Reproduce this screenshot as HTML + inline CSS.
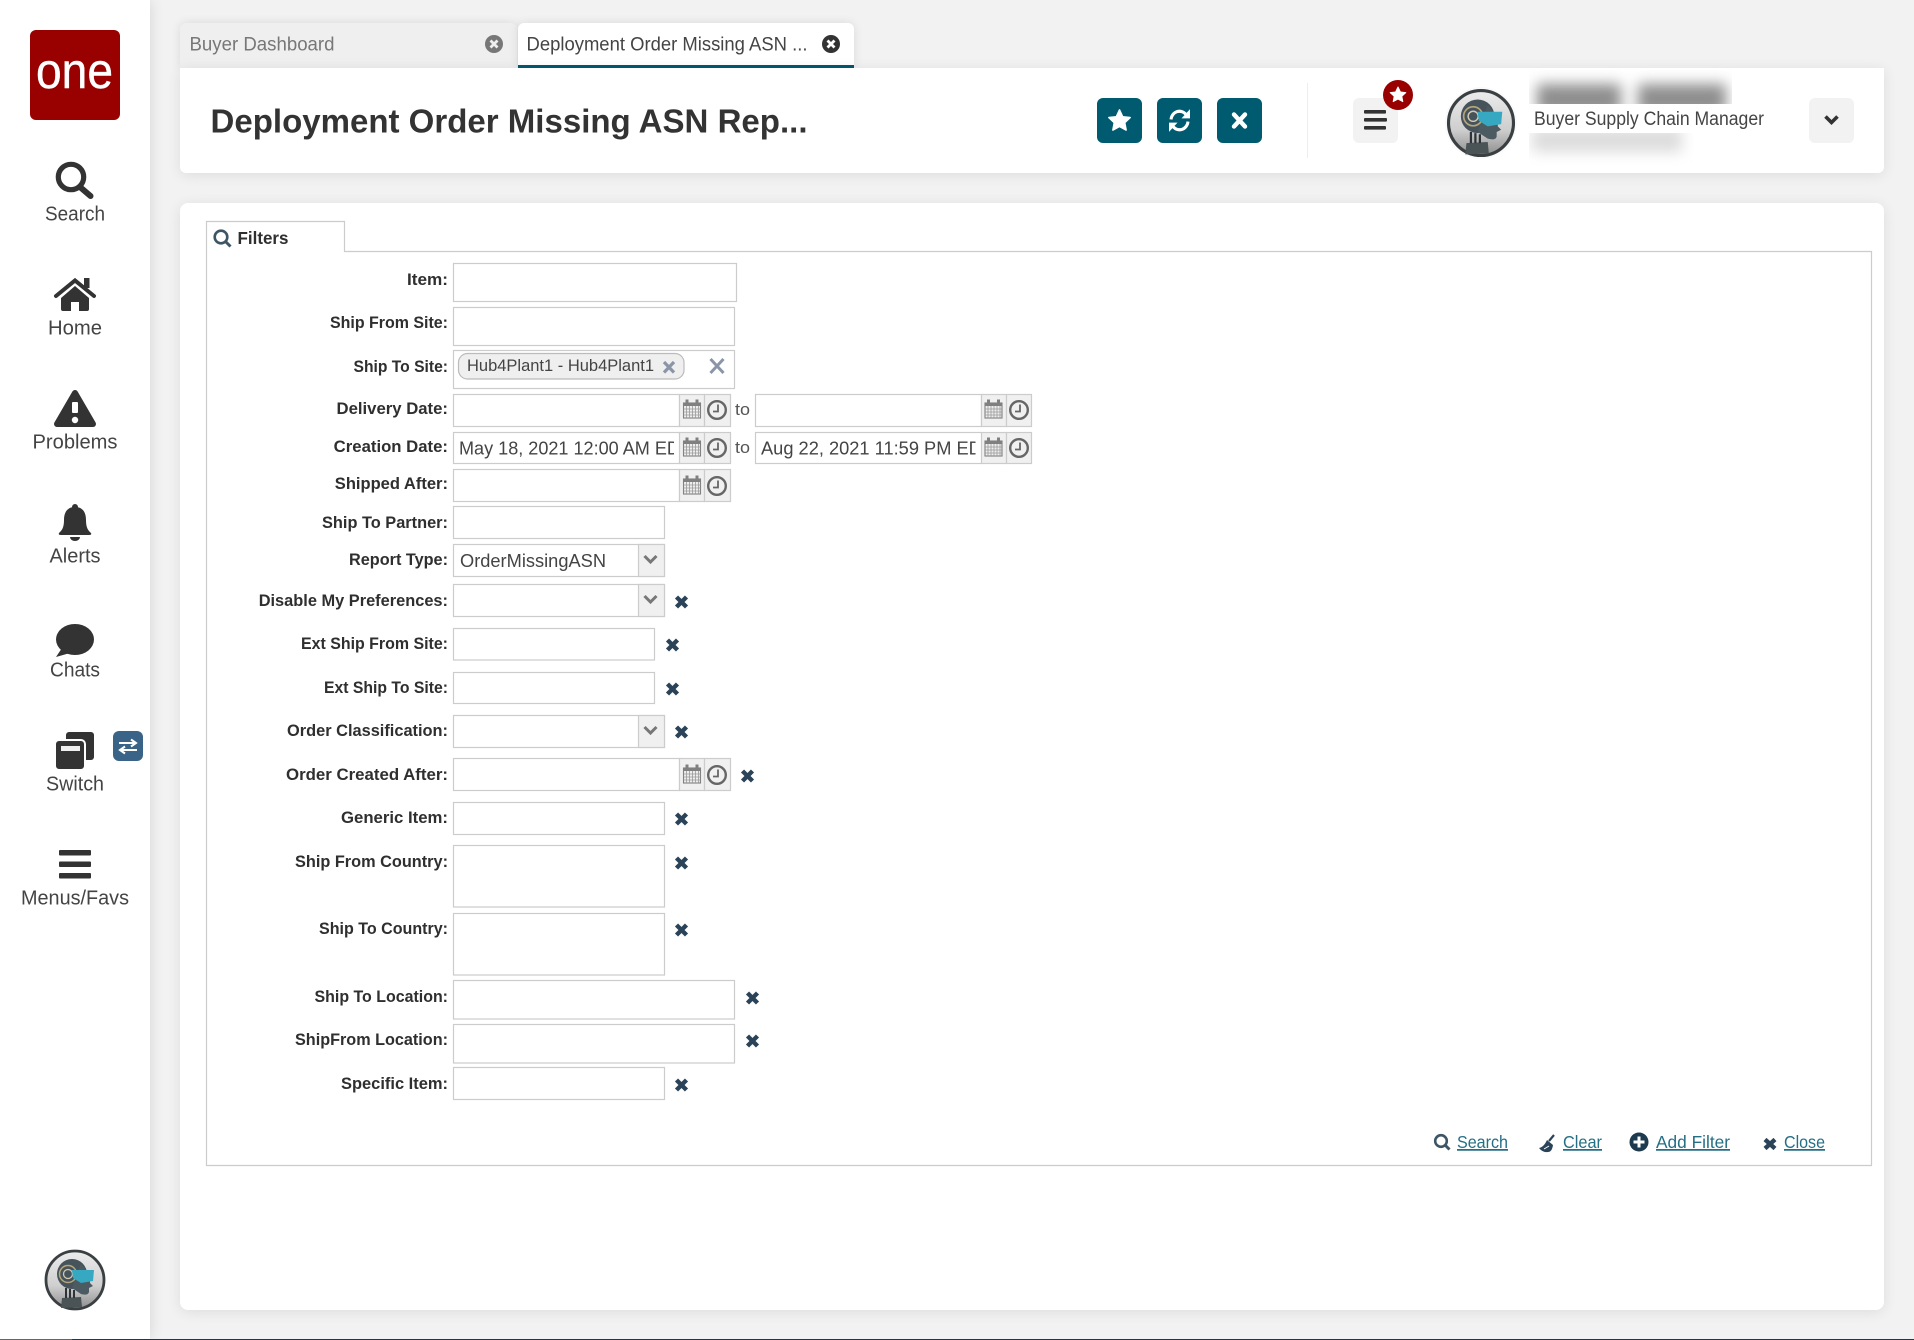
<!DOCTYPE html>
<html lang="en">
<head>
<meta charset="utf-8">
<title>Deployment Order Missing ASN Report</title>
<style>
html,body{margin:0;padding:0;width:1914px;height:1340px;overflow:hidden;background:#f2f2f2;font-family:"Liberation Sans",sans-serif}
.abs{position:absolute}
#side{left:0;top:0;width:150px;height:1340px;background:#fff;box-shadow:0 0 14px rgba(0,0,0,.12)}
#tab1{left:180px;top:23px;width:337px;height:45px;background:#efefef;border-radius:6px 6px 0 0;box-shadow:0 0 10px rgba(0,0,0,.10)}
#tab2{left:518px;top:23px;width:336px;height:45px;background:#fff;border-radius:6px 6px 0 0;box-shadow:0 0 10px rgba(0,0,0,.10);border-bottom:3px solid #005a70;box-sizing:border-box}
#head{left:180px;top:68px;width:1704px;height:105px;background:#fff;border-radius:0 0 6px 6px;box-shadow:0 2px 14px rgba(0,0,0,.09)}
#main{left:180px;top:203px;width:1704px;height:1107px;background:#fff;border-radius:8px;box-shadow:0 2px 14px rgba(0,0,0,.09)}
#bar1{left:0;top:1339px;width:72px;height:1px;background:#666}
#bar2{left:72px;top:1339px;width:1842px;height:1px;background:#1c3a4f}
svg{position:absolute;left:0;top:0}
text{font-family:"Liberation Sans",sans-serif}
.n{font-size:20px;fill:#444}
.t{font-size:19px}
.l{font-size:16.5px;font-weight:bold;fill:#2f2f2f}
.v{font-size:18.5px;fill:#444}
.a{font-size:17.5px;fill:#256f85;text-decoration:underline}
.b{fill:#fff;stroke:#ccc;stroke-width:1.2}
.c{fill:#f0f0f0;stroke:#ccc;stroke-width:1.2}
.x{stroke:#2b4358;stroke-width:4.4;fill:none}
.dd{stroke:#777;stroke-width:3;fill:none}
.k{fill:#333}
</style>
</head>
<body>
<div class="abs" id="side"></div>
<div class="abs" id="tab1"></div>
<div class="abs" id="tab2"></div>
<div class="abs" id="head"></div>
<div class="abs" id="main"></div>
<div class="abs" id="bar1"></div>
<div class="abs" id="bar2"></div>

<svg width="1914" height="1340" viewBox="0 0 1914 1340" xmlns="http://www.w3.org/2000/svg">
<defs>
<filter id="bl" x="-20%" y="-60%" width="140%" height="220%"><feGaussianBlur stdDeviation="7"/></filter>
<clipPath id="c1"><rect x="1529" y="70" width="203" height="34"/></clipPath>
<clipPath id="c2"><rect x="1529" y="133" width="165" height="34"/></clipPath>
<linearGradient id="sil" x1="0" y1="0" x2="0" y2="1"><stop offset="0" stop-color="#ececec"/><stop offset=".6" stop-color="#cfcfcf"/><stop offset="1" stop-color="#8d8d8d"/></linearGradient>
<g id="ava">
<circle r="29" fill="url(#sil)" stroke="#3a3f42" stroke-width="2.8"/>
<path d="M-14,28 L-13,18 L6,17 L7,27 Z" fill="#4a5356"/>
<path d="M-9,18 V8 M-5,18 V9 M-1,18 V10" stroke="#2d3336" stroke-width="2" fill="none"/>
<circle cx="-3" cy="-6" r="15" fill="#47535a"/>
<path d="M6,-16 L15,-5 L15,3 L18,6 L14,8 L14,12 Q13,16 6,14 L-3,8 Z" fill="#4c5a62"/>
<circle cx="-7" cy="-6" r="8.5" fill="none" stroke="#b7a57a" stroke-width="1.5"/>
<circle cx="-7" cy="-6" r="4.5" fill="none" stroke="#cfc9b4" stroke-width="1.3"/>
<path d="M-3,-10 L19,-10 L18,1 L6,3 L-2,-2 Z" fill="#37a8c2"/>
</g>
<g id="cal">
<rect x="-8.5" y="-6" width="17" height="15" fill="#eee" stroke="#808080" stroke-width="1.1"/>
<rect x="-9" y="-6.5" width="18" height="3.5" fill="#808080"/>
<rect x="-6.5" y="-9.5" width="3" height="4" fill="#808080"/><rect x="3.5" y="-9.5" width="3" height="4" fill="#808080"/>
<path d="M-5.5,-3V9M-2.5,-3V9M.5,-3V9M3.5,-3V9M6.5,-3V9M-8.5,0H8.5M-8.5,3H8.5M-8.5,6H8.5" stroke="#999" stroke-width=".8" fill="none"/>
</g>
<g id="clk">
<circle r="8.8" fill="none" stroke="#666" stroke-width="2.4"/>
<path d="M1,-5.5V1.5H-4" fill="none" stroke="#666" stroke-width="1.8"/>
</g>
</defs>

<!-- Sidebar -->
<rect x="30" y="30" width="90" height="90" rx="6" fill="#990000"/>
<text x="36" y="88" font-size="50" fill="#fff" stroke="#fff" stroke-width=".4" textLength="77" lengthAdjust="spacingAndGlyphs">one</text>

<circle cx="71" cy="177" r="12.7" fill="none" stroke="#333" stroke-width="5.2"/>
<path d="M80,187 L90.5,196" stroke="#333" stroke-width="6" stroke-linecap="round"/>
<text class="n" x="45" y="220.5" textLength="60" lengthAdjust="spacingAndGlyphs">Search</text>

<path class="k" d="M61,298 L75,286 L89,298 V309 Q89,311 87,311 H79 V302 H71 V311 H63 Q61,311 61,309 Z"/>
<path d="M56,296 L75,280.5 L94,296" fill="none" stroke="#333" stroke-width="4" stroke-linecap="round"/>
<rect class="k" x="84" y="278" width="5.5" height="10"/>
<text class="n" x="48" y="334.5" textLength="54" lengthAdjust="spacingAndGlyphs">Home</text>

<path d="M75,393 L93,424 H57 Z" fill="#333" stroke="#333" stroke-width="6" stroke-linejoin="round"/>
<rect x="72" y="402" width="6" height="11" rx="1" fill="#fff"/><circle cx="75" cy="420" r="3.2" fill="#fff"/>
<text class="n" x="32.5" y="448.5" textLength="85" lengthAdjust="spacingAndGlyphs">Problems</text>

<circle class="k" cx="75" cy="507" r="3"/>
<path class="k" d="M75,507 C66,507 64,514 64,520 C64,529 61,531 59,533 Q58,535 61,535 H89 Q92,535 91,533 C89,531 86,529 86,520 C86,514 84,507 75,507 Z"/>
<path class="k" d="M70,537 a5,4 0 0 0 10,0 Z"/>
<text class="n" x="49.5" y="562.5" textLength="51" lengthAdjust="spacingAndGlyphs">Alerts</text>

<ellipse class="k" cx="75" cy="639.5" rx="19" ry="15.5"/>
<path class="k" d="M62,648 L56,657 L70,653 Z"/>
<text class="n" x="50" y="676.5" textLength="50" lengthAdjust="spacingAndGlyphs">Chats</text>

<rect class="k" x="66" y="732" width="28" height="28" rx="3"/>
<rect x="55" y="740" width="30" height="30" rx="4" fill="#333" stroke="#fff" stroke-width="2"/>
<rect x="61" y="746" width="19" height="5" fill="#eee"/>
<text class="n" x="46" y="790.5" textLength="58" lengthAdjust="spacingAndGlyphs">Switch</text>

<rect x="113" y="731" width="30" height="30" rx="6" fill="#3a6487"/>
<path d="M119,743 H135 M131,739.5 L136,743 L131,746.5 M137,750 H121 M125,746.5 L120,750 L125,753.5" fill="none" stroke="#fff" stroke-width="2"/>

<rect class="k" x="59" y="850" width="32" height="5.5" rx="1"/><rect class="k" x="59" y="861.5" width="32" height="5.5" rx="1"/><rect class="k" x="59" y="873" width="32" height="5.5" rx="1"/>
<text class="n" x="21" y="904.5" textLength="108" lengthAdjust="spacingAndGlyphs">Menus/Favs</text>

<use href="#ava" transform="translate(75,1280)"/>

<!-- Tabs -->
<text class="t" x="189.5" y="50.5" fill="#777" textLength="145" lengthAdjust="spacingAndGlyphs">Buyer Dashboard</text>
<circle cx="494" cy="44" r="9" fill="#777"/>
<path d="M490.5,40.5 L497.5,47.5 M497.5,40.5 L490.5,47.5" stroke="#efefef" stroke-width="2.8"/>
<text class="t" x="526.5" y="50.5" fill="#444" textLength="281" lengthAdjust="spacingAndGlyphs">Deployment Order Missing ASN ...</text>
<circle cx="831" cy="44" r="9" fill="#333"/>
<path d="M827.5,40.5 L834.5,47.5 M834.5,40.5 L827.5,47.5" stroke="#fff" stroke-width="2.8"/>

<!-- Header -->
<text x="210.5" y="132.5" font-size="33.5" font-weight="bold" fill="#333" textLength="597" lengthAdjust="spacingAndGlyphs">Deployment Order Missing ASN Rep...</text>

<rect x="1097" y="98" width="45" height="45" rx="6" fill="#005a70"/>
<rect x="1157" y="98" width="45" height="45" rx="6" fill="#005a70"/>
<rect x="1217" y="98" width="45" height="45" rx="6" fill="#005a70"/>
<path transform="translate(1119.5,121)" d="M0,-11 L3.2,-4.2 L10.6,-3.4 L5.2,1.7 L6.6,9 L0,5.4 L-6.6,9 L-5.2,1.7 L-10.6,-3.4 L-3.2,-4.2 Z" fill="#fff" stroke="#fff" stroke-width="1.6" stroke-linejoin="round"/>
<g transform="translate(1179.5,120.5) scale(1,1.08)" fill="none" stroke="#fff" stroke-width="3">
<path d="M-8.5,-1 A8.5,8.5 0 0 1 6.5,-5.5"/>
<path d="M8.5,1 A8.5,8.5 0 0 1 -6.5,5.5"/>
<path d="M10.5,-10.5 V-2 H2 Z" fill="#fff" stroke="none"/>
<path d="M-10.5,10.5 V2 H-2 Z" fill="#fff" stroke="none"/>
</g>
<path d="M1234,114.5 L1245,126.5 M1245,114.5 L1234,126.5" stroke="#fff" stroke-width="4.4" stroke-linecap="round"/>

<rect x="1307" y="83" width="1" height="75" fill="#eee"/>
<rect x="1353" y="98" width="45" height="45" rx="6" fill="#f2f2f2"/>
<rect class="k" x="1364" y="110" width="22" height="3.6" rx="1"/><rect class="k" x="1364" y="118" width="23" height="3.6" rx="1"/><rect class="k" x="1364" y="126" width="22" height="3.6" rx="1"/>
<circle cx="1398" cy="95" r="15" fill="#990000"/>
<path transform="translate(1398,95)" d="M0,-8 L2.4,-3 L7.8,-2.4 L3.8,1.3 L4.8,6.6 L0,4 L-4.8,6.6 L-3.8,1.3 L-7.8,-2.4 L-2.4,-3 Z" fill="#fff" stroke="#fff" stroke-linejoin="round"/>

<circle cx="1481" cy="123" r="36" fill="#fafafa"/>
<use href="#ava" transform="translate(1481,123) scale(1.12)"/>

<g clip-path="url(#c1)"><g filter="url(#bl)" fill="#8e8e8e">
<rect x="1537" y="84" width="84" height="30"/><rect x="1638" y="84" width="88" height="30"/></g></g>
<g clip-path="url(#c2)"><g filter="url(#bl)" fill="#dcdcdc">
<rect x="1532" y="128" width="150" height="24"/></g></g>
<text x="1534" y="125" font-size="19" fill="#444" textLength="230" lengthAdjust="spacingAndGlyphs">Buyer Supply Chain Manager</text>

<rect x="1809" y="98" width="45" height="45" rx="6" fill="#f2f2f2"/>
<path d="M1825.5,116.5 L1831.5,122.5 L1837.5,116.5" fill="none" stroke="#333" stroke-width="3.6"/>

<!-- Filters panel -->
<path d="M206.5,1165.5 H1871.5 V251.5 H344.5 V221.5 H206.5 Z" fill="#fff" stroke="#ccc" stroke-width="1.2"/>
<circle cx="221" cy="237" r="6.3" fill="none" stroke="#3e5566" stroke-width="2.6"/>
<path d="M226,242 L230.5,246.5" stroke="#3e5566" stroke-width="3"/>
<text x="237.5" y="244" font-size="17.5" font-weight="bold" fill="#2f2f2f" textLength="51" lengthAdjust="spacingAndGlyphs">Filters</text>

<!-- Labels -->
<text class="l" x="407" y="285" textLength="41" lengthAdjust="spacingAndGlyphs">Item:</text>
<text class="l" x="330" y="328" textLength="118" lengthAdjust="spacingAndGlyphs">Ship From Site:</text>
<text class="l" x="353.5" y="372" textLength="94.5" lengthAdjust="spacingAndGlyphs">Ship To Site:</text>
<text class="l" x="336.5" y="414" textLength="111.5" lengthAdjust="spacingAndGlyphs">Delivery Date:</text>
<text class="l" x="333.7" y="452" textLength="114.3" lengthAdjust="spacingAndGlyphs">Creation Date:</text>
<text class="l" x="334.8" y="489" textLength="113.2" lengthAdjust="spacingAndGlyphs">Shipped After:</text>
<text class="l" x="322" y="528" textLength="126" lengthAdjust="spacingAndGlyphs">Ship To Partner:</text>
<text class="l" x="349" y="565" textLength="99" lengthAdjust="spacingAndGlyphs">Report Type:</text>
<text class="l" x="258.7" y="606" textLength="189.3" lengthAdjust="spacingAndGlyphs">Disable My Preferences:</text>
<text class="l" x="301" y="649" textLength="147" lengthAdjust="spacingAndGlyphs">Ext Ship From Site:</text>
<text class="l" x="324" y="693" textLength="124" lengthAdjust="spacingAndGlyphs">Ext Ship To Site:</text>
<text class="l" x="287" y="736" textLength="161" lengthAdjust="spacingAndGlyphs">Order Classification:</text>
<text class="l" x="286" y="780" textLength="162" lengthAdjust="spacingAndGlyphs">Order Created After:</text>
<text class="l" x="341" y="823" textLength="107" lengthAdjust="spacingAndGlyphs">Generic Item:</text>
<text class="l" x="295" y="867" textLength="153" lengthAdjust="spacingAndGlyphs">Ship From Country:</text>
<text class="l" x="319" y="934" textLength="129" lengthAdjust="spacingAndGlyphs">Ship To Country:</text>
<text class="l" x="314.5" y="1002" textLength="133.5" lengthAdjust="spacingAndGlyphs">Ship To Location:</text>
<text class="l" x="295" y="1045" textLength="153" lengthAdjust="spacingAndGlyphs">ShipFrom Location:</text>
<text class="l" x="341" y="1089" textLength="107" lengthAdjust="spacingAndGlyphs">Specific Item:</text>

<!-- Plain inputs -->
<rect class="b" x="453.5" y="263.5" width="283" height="38"/>
<rect class="b" x="453.5" y="307.5" width="281" height="38"/>
<rect class="b" x="453.5" y="350.5" width="281" height="38"/>
<rect x="458.5" y="353.5" width="225.5" height="25.5" rx="9" fill="#efefef" stroke="#bbb" stroke-width="1.2"/>
<text x="467" y="371" font-size="17" fill="#444" textLength="187" lengthAdjust="spacingAndGlyphs">Hub4Plant1 - Hub4Plant1</text>
<path d="M664,362 L674,372.5 M674,362 L664,372.5" stroke="#8a96a8" stroke-width="3.2"/>
<path d="M710.5,359 L723.5,373 M723.5,359 L710.5,373" stroke="#8a96a8" stroke-width="3"/>

<!-- Date rows -->
<rect class="b" x="453.5" y="394.5" width="226" height="32"/>
<rect class="c" x="679.5" y="394.5" width="25" height="32"/><rect class="c" x="704.5" y="394.5" width="26" height="32"/>
<use href="#cal" transform="translate(692,409)"/><use href="#clk" transform="translate(717,410)"/>
<text x="735" y="415" font-size="16.5" fill="#555" textLength="15" lengthAdjust="spacingAndGlyphs">to</text>
<rect class="b" x="755.5" y="394.5" width="226" height="32"/>
<rect class="c" x="981.5" y="394.5" width="25" height="32"/><rect class="c" x="1006.5" y="394.5" width="25" height="32"/>
<use href="#cal" transform="translate(993.5,409)"/><use href="#clk" transform="translate(1019,410)"/>

<rect class="b" x="453.5" y="432.5" width="226" height="31"/>
<text class="v" x="459" y="454.5" textLength="232" lengthAdjust="spacingAndGlyphs">May 18, 2021 12:00 AM EDT</text>
<rect x="674" y="433.5" width="5" height="29" fill="#fff"/>
<rect class="c" x="679.5" y="432.5" width="25" height="31"/><rect class="c" x="704.5" y="432.5" width="26" height="31"/>
<use href="#cal" transform="translate(692,447)"/><use href="#clk" transform="translate(717,448)"/>
<text x="735" y="453" font-size="16.5" fill="#555" textLength="15" lengthAdjust="spacingAndGlyphs">to</text>
<rect class="b" x="755.5" y="432.5" width="226" height="31"/>
<text class="v" x="761" y="454.5" textLength="232" lengthAdjust="spacingAndGlyphs">Aug 22, 2021 11:59 PM EDT</text>
<rect x="975.5" y="433.5" width="6" height="29" fill="#fff"/>
<rect class="c" x="981.5" y="432.5" width="25" height="31"/><rect class="c" x="1006.5" y="432.5" width="25" height="31"/>
<use href="#cal" transform="translate(993.5,447)"/><use href="#clk" transform="translate(1019,448)"/>

<rect class="b" x="453.5" y="469.5" width="226" height="32"/>
<rect class="c" x="679.5" y="469.5" width="25" height="32"/><rect class="c" x="704.5" y="469.5" width="26" height="32"/>
<use href="#cal" transform="translate(692,485)"/><use href="#clk" transform="translate(717,486)"/>

<rect class="b" x="453.5" y="506.5" width="211" height="32"/>

<!-- Selects -->
<rect class="b" x="453.5" y="544.5" width="211" height="32"/>
<rect class="c" x="638.5" y="544.5" width="26" height="32"/>
<path class="dd" d="M644.5,556 L650.5,562 L656.5,556"/>
<text class="v" x="460" y="567" textLength="146" lengthAdjust="spacingAndGlyphs">OrderMissingASN</text>

<rect class="b" x="453.5" y="584.5" width="211" height="32"/>
<rect class="c" x="638.5" y="584.5" width="26" height="32"/>
<path class="dd" d="M644.5,596 L650.5,602 L656.5,596"/>
<path class="x" d="M676.5,597 L686.5,607 M686.5,597 L676.5,607"/>

<rect class="b" x="453.5" y="628.5" width="201" height="31.5"/>
<path class="x" d="M667.5,640 L677.5,650 M677.5,640 L667.5,650"/>
<rect class="b" x="453.5" y="672.5" width="201" height="31"/>
<path class="x" d="M667.5,684 L677.5,694 M677.5,684 L667.5,694"/>

<rect class="b" x="453.5" y="715.5" width="211" height="32"/>
<rect class="c" x="638.5" y="715.5" width="26" height="32"/>
<path class="dd" d="M644.5,727 L650.5,733 L656.5,727"/>
<path class="x" d="M676.5,727 L686.5,737 M686.5,727 L676.5,737"/>

<rect class="b" x="453.5" y="758.5" width="226" height="32"/>
<rect class="c" x="679.5" y="758.5" width="25" height="32"/><rect class="c" x="704.5" y="758.5" width="26" height="32"/>
<use href="#cal" transform="translate(692,774)"/><use href="#clk" transform="translate(717,775)"/>
<path class="x" d="M742.5,771 L752.5,781 M752.5,771 L742.5,781"/>

<rect class="b" x="453.5" y="802.5" width="211" height="32"/>
<path class="x" d="M676.5,814 L686.5,824 M686.5,814 L676.5,824"/>
<rect class="b" x="453.5" y="845.5" width="211" height="61.5"/>
<path class="x" d="M676.5,858 L686.5,868 M686.5,858 L676.5,868"/>
<rect class="b" x="453.5" y="913.5" width="211" height="61.5"/>
<path class="x" d="M676.5,925 L686.5,935 M686.5,925 L676.5,935"/>
<rect class="b" x="453.5" y="980.5" width="281" height="38.5"/>
<path class="x" d="M747.5,993 L757.5,1003 M757.5,993 L747.5,1003"/>
<rect class="b" x="453.5" y="1024.5" width="281" height="38.5"/>
<path class="x" d="M747.5,1036 L757.5,1046 M757.5,1036 L747.5,1046"/>
<rect class="b" x="453.5" y="1067.5" width="211" height="32"/>
<path class="x" d="M676.5,1080 L686.5,1090 M686.5,1080 L676.5,1090"/>

<!-- Bottom actions -->
<circle cx="1441" cy="1141" r="5.8" fill="none" stroke="#3e5566" stroke-width="2.6"/>
<path d="M1445.5,1145.5 L1449.5,1149.5" stroke="#3e5566" stroke-width="3"/>
<text class="a" x="1457" y="1148" textLength="51" lengthAdjust="spacingAndGlyphs">Search</text>

<path d="M1549,1141 L1554,1135" stroke="#2b4358" stroke-width="2.2"/>
<path d="M1539,1148 Q1544,1147 1547,1140 L1553,1145 Q1552,1152 1548,1152 Q1543,1153 1539,1148 Z" fill="#2b4358"/>
<path d="M1544,1149 L1549,1146" stroke="#fff" stroke-width="1"/>
<text class="a" x="1563" y="1148" textLength="39" lengthAdjust="spacingAndGlyphs">Clear</text>

<circle cx="1639" cy="1142" r="9.5" fill="#1d3a4e"/>
<path d="M1639,1136.5 V1147.5 M1633.5,1142 H1644.5" stroke="#fff" stroke-width="3"/>
<text class="a" x="1656" y="1148" textLength="74" lengthAdjust="spacingAndGlyphs">Add Filter</text>

<path class="x" d="M1765,1139.5 L1775,1148.5 M1775,1139.5 L1765,1148.5"/>
<text class="a" x="1784" y="1148" textLength="41" lengthAdjust="spacingAndGlyphs">Close</text>
</svg>
</body>
</html>
